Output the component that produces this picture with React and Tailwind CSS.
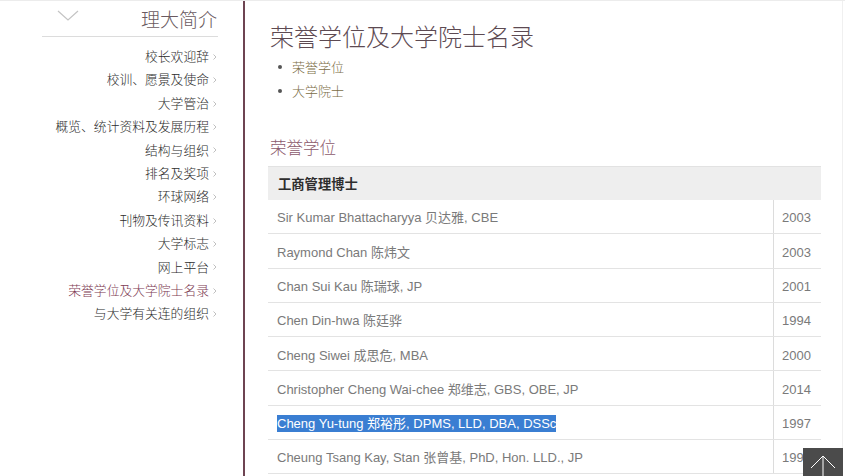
import React from "react";

const menu = [
  "校长欢迎辞",
  "校训、愿景及使命",
  "大学管治",
  "概览、统计资料及发展历程",
  "结构与组织",
  "排名及奖项",
  "环球网络",
  "刊物及传讯资料",
  "大学标志",
  "网上平台",
  "荣誉学位及大学院士名录",
  "与大学有关连的组织",
];

const rows = [
  { name: "Sir Kumar Bhattacharyya 贝达雅, CBE", year: "2003" },
  { name: "Raymond Chan 陈炜文", year: "2003" },
  { name: "Chan Sui Kau 陈瑞球, JP", year: "2001" },
  { name: "Chen Din-hwa 陈廷骅", year: "1994" },
  { name: "Cheng Siwei 成思危, MBA", year: "2000" },
  { name: "Christopher Cheng Wai-chee 郑维志, GBS, OBE, JP", year: "2014" },
  { name: "Cheng Yu-tung 郑裕彤, DPMS, LLD, DBA, DSSc", year: "1997", selected: true },
  { name: "Cheung Tsang Kay, Stan 张曾基, PhD, Hon. LLD., JP", year: "1997" },
];

const cjk = "font-['Noto_Sans_CJK_SC',sans-serif]";
const mixed = "font-['Liberation_Sans','Noto_Sans_CJK_SC',sans-serif]";

export default function App() {
  return (
    <div className={`relative flex h-[476px] w-[845px] overflow-hidden border-t border-[#ececec] bg-white font-light ${cjk}`}>
      {/* Sidebar */}
      <aside className="w-[243px] shrink-0">
        <div className="ml-[42px] mr-[25px]">
          <div className="flex h-[36px] items-center justify-between border-b border-[#dcdcdc]">
            <svg width="22" height="12" viewBox="0 0 22 12" className="ml-[15px] mt-[-6px]">
              <polyline points="1,1 11,10 21,1" fill="none" stroke="#c4c4c4" strokeWidth="1.2" />
            </svg>
            <span className="mr-[1px] text-[19px] leading-none text-[#6a5a60]">理大简介</span>
          </div>
          <ul className="pt-[7px]">
            {menu.map((m, i) => (
              <li key={m} className="flex items-center justify-end text-[12.8px] leading-[23.4px]">
                <span className={i === 10 ? "text-[#7d3a52]" : "text-[#2c2c2c]"}>{m}</span>
                <svg width="7" height="8" viewBox="0 0 7 8" className="ml-[2px] mt-[2px]">
                  <polyline points="2.5,1.5 5,4 2.5,6.5" fill="none" stroke="#c0c0c0" strokeWidth="1" />
                </svg>
              </li>
            ))}
          </ul>
        </div>
      </aside>

      {/* Divider */}
      <div className="w-[2px] shrink-0 bg-[#6e4452]" />

      {/* Main */}
      <main className="flex-1 pl-[23px] pr-[24px]">
        <h1 className="pl-[2px] pt-[20px] text-[24px] leading-[30px] text-[#5d4a52]">荣誉学位及大学院士名录</h1>
        <ul className="mt-[4px] pl-[10px]">
          {["荣誉学位", "大学院士"].map((b) => (
            <li key={b} className="flex items-center text-[13px] leading-[24px] text-[#7b6d45]">
              <span className="mr-[10px] h-[4px] w-[4px] rounded-full bg-[#555]" />
              {b}
            </li>
          ))}
        </ul>
        <h2 className="mt-[33px] pl-[2px] text-[16.5px] leading-[22px] text-[#8c5a6c]">荣誉学位</h2>
        <div className="mt-[8px]">
          <div className="flex h-[34px] items-center border-t border-[#e2e2e2] bg-[#eeeeee] pl-[10px] text-[13.3px] font-bold text-[#2e2e2e]">
            工商管理博士
          </div>
          {rows.map((r) => (
            <div key={r.name} className={`flex h-[34.3px] border-b border-[#e3e3e3] pt-[3px] text-[13px] font-normal text-[#7a7a7a] ${mixed}`}>
              <div className="flex flex-1 items-center pl-[9px]">
                {r.selected ? <span className="bg-[#3a7ed2] leading-[17px] text-white">{r.name}</span> : r.name}
              </div>
              <div className="-mt-[3px] flex w-[48px] items-center border-l border-[#dcdcdc] pl-[8px] pt-[3px]">{r.year}</div>
            </div>
          ))}
        </div>
      </main>

      {/* Right edge */}
      <div className="absolute right-[2px] top-0 h-full w-px bg-[#f0f0f0]" />

      {/* Back to top */}
      <div className="absolute bottom-0 right-[2px] flex h-[28px] w-[40px] items-end justify-center bg-[#4b4b4b]">
        <svg width="28" height="22" viewBox="0 0 28 22">
          <polyline points="2,14 14,2 26,14" fill="none" stroke="#fff" strokeWidth="1" />
          <line x1="14" y1="2" x2="14" y2="22" stroke="#fff" strokeWidth="1" />
        </svg>
      </div>
    </div>
  );
}
